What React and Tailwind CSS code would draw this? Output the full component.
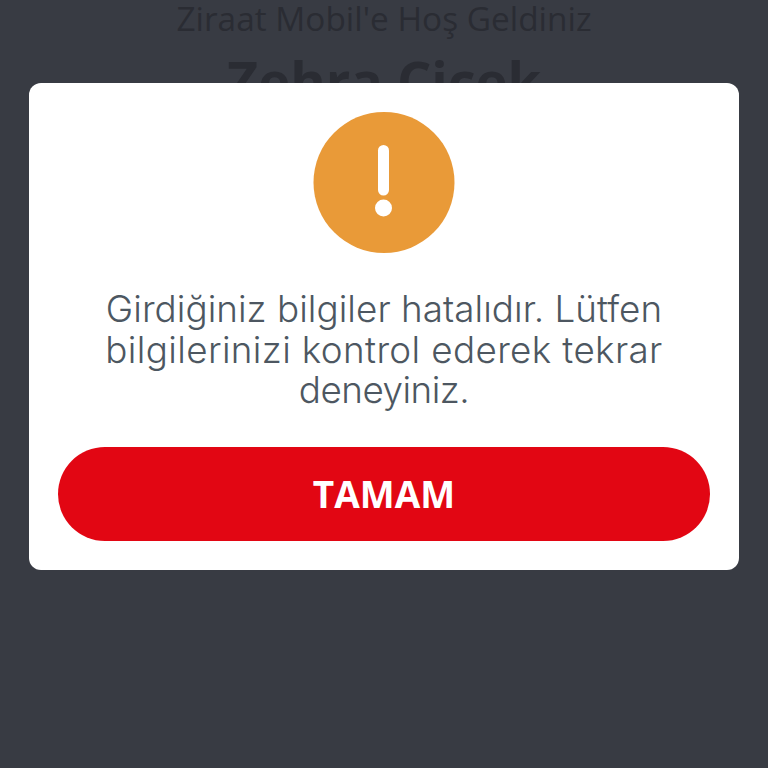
export default function App() {
  return (
    <div className="h-[768px] w-[768px] overflow-hidden bg-[#383b43] font-['Open_Sans','Liberation_Sans',sans-serif]">
      <div className="flex h-[83px] flex-col items-center overflow-hidden text-[#2a2c33]">
        <p className="h-[36px] text-[33.4px] leading-[36px] whitespace-nowrap">Ziraat Mobil'e Hoş Geldiniz</p>
        <p className="mt-[8px] text-[54px] leading-[72px] font-bold whitespace-nowrap">Zehra Çiçek</p>
      </div>
      <div className="mx-[29px] flex h-[487px] flex-col items-center rounded-[12px] bg-white px-[29px] pt-[29px]">
        <div className="flex h-[141px] w-[141px] -translate-x-[0.5px] items-center justify-center rounded-full bg-[#e99a38] pb-[3px]">
          <svg width="18" height="72" viewBox="0 0 18 72">
            <path d="M9 5.500 L9 45" stroke="#fff" strokeWidth="11" strokeLinecap="round" />
            <circle cx="9" cy="63" r="8.500" fill="#fff" />
          </svg>
        </div>
        <div className="mt-[36px] w-full font-['Inter',sans-serif] text-center text-[36.800px] leading-[40.500px] font-light whitespace-nowrap text-[#4d5761]">
          <p className="tracking-[0.05px]">Girdiğiniz bilgiler hatalıdır. Lütfen</p>
          <p className="tracking-[0.37px]">bilgilerinizi kontrol ederek tekrar</p>
          <p className="tracking-[-0.5px]">deneyiniz.</p>
        </div>
        <button className="mt-[36px] flex h-[94px] w-full items-center justify-center rounded-full bg-[#e20613] text-[37px] font-bold text-white">
          TAMAM
        </button>
      </div>
    </div>
  );
}
